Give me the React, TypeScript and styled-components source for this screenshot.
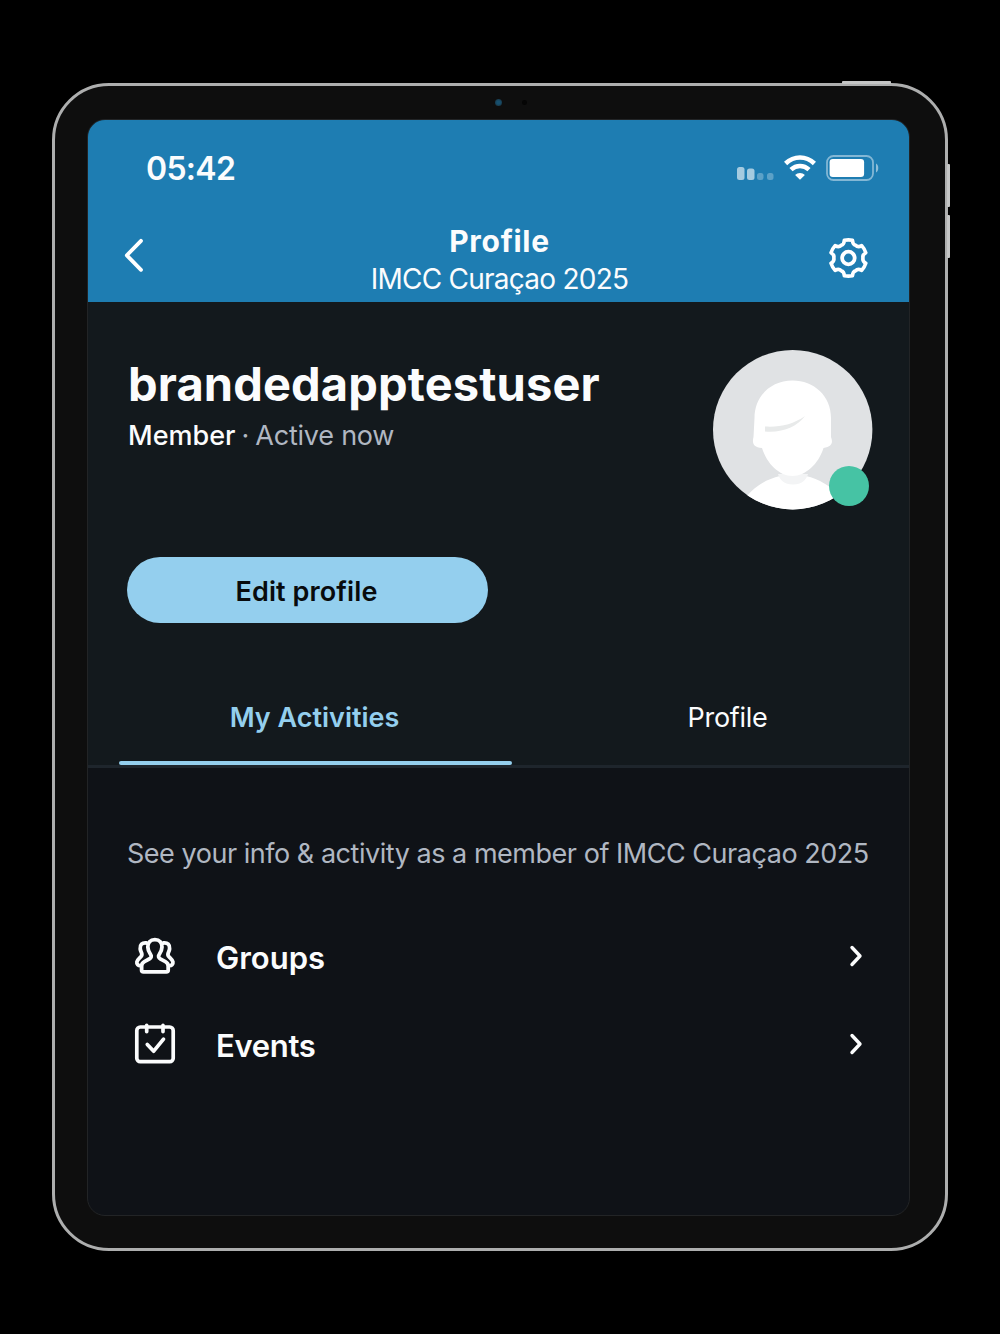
import React from "react";
import styled, { createGlobalStyle } from "styled-components";

const GlobalStyle = createGlobalStyle`
  *, *::before, *::after { box-sizing: border-box; }
  html, body { margin: 0; background: #000; }
  body { font-family: "Inter", "Noto Sans", sans-serif; -webkit-font-smoothing: antialiased; }
`;

const Stage = styled.main`
  width: 1000px;
  height: 1334px;
  padding: 83px 52px;
  background: #000;
  overflow: hidden;
`;

const Tablet = styled.div`
  position: relative;
  width: 896px;
  height: 1168px;
  padding: 33px 32px;
  border: 3px solid #adaeae;
  border-radius: 57px;
  background: #0e0e0e;
`;

const HardwareKey = styled.span<{ $top: number; $right: number; $w: number; $h: number }>`
  position: absolute;
  top: ${(p) => p.$top}px;
  right: ${(p) => p.$right}px;
  width: ${(p) => p.$w}px;
  height: ${(p) => p.$h}px;
  border-radius: 1px;
  background: #c4c5c5;
`;

const Lens = styled.span<{ $x: number; $size: number; $color: string }>`
  position: absolute;
  top: ${(p) => 16 - p.$size / 2}px;
  left: ${(p) => p.$x}px;
  width: ${(p) => p.$size}px;
  height: ${(p) => p.$size}px;
  border-radius: 50%;
  background: ${(p) => p.$color};
`;

const Screen = styled.div`
  display: flex;
  flex-direction: column;
  width: 823px;
  height: 1097px;
  border: 1px solid #222426;
  border-radius: 18px;
  background: #0f1217;
  overflow: hidden;
`;

const Header = styled.header`
  flex: none;
  height: 182px;
  background: #1e7db2;
  color: #fff;
`;

const StatusBar = styled.div`
  display: flex;
  align-items: center;
  justify-content: space-between;
  height: 96px;
  padding: 1px 29px 0 58px;
`;

const StatusIcons = styled.div`
  display: flex;
  gap: 10px;
  padding-bottom: 2px;
`;

const NavBar = styled.div`
  display: grid;
  grid-template-columns: 100px 1fr 100px;
  height: 86px;
`;

const IconButton = styled.button<{ $align: string; $pad: string }>`
  display: flex;
  align-items: flex-start;
  justify-content: ${(p) => p.$align};
  padding: ${(p) => p.$pad};
  border: 0;
  background: none;
  color: inherit;
`;

const TitleBlock = styled.div`
  display: flex;
  flex-direction: column;
  align-items: center;
  padding: 6px 0 0 2px;
`;

const Label = styled.span<{ $size: number; $line: number; $weight?: number; $track?: number; $color?: string }>`
  display: block;
  white-space: nowrap;
  font-size: ${(p) => p.$size}px;
  line-height: ${(p) => p.$line}px;
  font-weight: ${(p) => p.$weight ?? 400};
  letter-spacing: ${(p) => p.$track ?? 0}px;
  color: ${(p) => p.$color ?? "#fbfcfd"};
`;

const Summary = styled.section`
  flex: none;
  height: 466px;
  border-bottom: 3px solid #1e252c;
  background: #13191d;
`;

const Identity = styled.div`
  display: flex;
  justify-content: space-between;
  height: 255px;
  padding: 48px 36px 0 40px;
`;

const NameBlock = styled.div`
  padding-top: 6px;
`;

const RoleLine = styled.div`
  display: flex;
  gap: 6px;
  padding-top: 2px;
`;

const AvatarFrame = styled.div`
  position: relative;
  width: 160px;
  height: 160px;
`;

const OnlineDot = styled.span`
  position: absolute;
  left: 116px;
  top: 116px;
  width: 40px;
  height: 40px;
  border-radius: 50%;
  background: #46c3a4;
`;

const EditButton = styled.button`
  display: flex;
  align-items: center;
  justify-content: center;
  width: 361px;
  height: 66px;
  margin-left: 39px;
  padding: 4px 2px 0 0;
  border: 0;
  border-radius: 33px;
  background: #94cfee;
  font-family: inherit;
`;

const Tabs = styled.nav`
  display: grid;
  grid-template-columns: 393px 393px;
  column-gap: 20px;
  height: 142px;
  padding-left: 31px;
`;

const Tab = styled.div`
  display: flex;
  flex-direction: column;
  align-items: center;
  justify-content: flex-end;
  gap: 24px;
`;

const TabText = styled.div`
  padding-right: 2px;
`;

const TabMarker = styled.span<{ $active?: boolean }>`
  width: 100%;
  height: 4px;
  border-radius: 2px;
  background: ${(p) => (p.$active ? "#94cfee" : "transparent")};
`;

const Activities = styled.section`
  padding: 64px 40px 0 39px;
`;

const List = styled.ul`
  margin: 38px 0 0;
  padding: 0;
  list-style: none;
`;

const Row = styled.li`
  display: grid;
  grid-template-columns: 89px 1fr 20px;
  align-items: center;
  height: 88px;
  color: #fbfcfd;
`;

const RowIcon = styled.span`
  display: flex;
  padding: 0 0 4px 6px;
`;

const RowArrow = styled.span`
  display: flex;
  padding-bottom: 4px;
`;

const polar = (r: number, deg: number) => {
  const a = ((deg - 90) * Math.PI) / 180;
  return `${(22.4 + r * Math.cos(a)).toFixed(2)} ${(22 + r * Math.sin(a)).toFixed(2)}`;
};

const gearPath =
  `M${polar(18.2, -13)}` +
  [0, 60, 120, 180, 240, 300]
    .map(
      (d) =>
        `Q${polar(18.6, d)} ${polar(18.2, d + 13)}C${polar(15.2, d + 16)} ${polar(14.2, d + 22)} ${polar(14.6, d + 30)}C${polar(14.2, d + 38)} ${polar(15.2, d + 44)} ${polar(18.2, d + 47)}`
    )
    .join("") +
  "Z";

const GearIcon = () => (
  <svg width="44" height="44" viewBox="0 0 44 44" fill="none" stroke="currentColor" strokeWidth="3.6" strokeLinejoin="round">
    <path d={gearPath} />
    <circle cx="22.4" cy="22" r="6.300" strokeWidth="3.800" />
  </svg>
);

const BackIcon = () => (
  <svg width="24" height="36" viewBox="0 0 24 36" fill="none" stroke="currentColor" strokeWidth="3.8" strokeLinecap="round" strokeLinejoin="round">
    <path d="M19 3.800 4.800 18.300 19 32.800" />
  </svg>
);

const ChevronIcon = () => (
  <svg width="16" height="26" viewBox="0 0 16 26" fill="none" stroke="currentColor" strokeWidth="3.4" strokeLinecap="round" strokeLinejoin="round">
    <path d="M3 4.500 11 13 3 21.500" />
  </svg>
);

const SignalIcon = () => (
  <svg width="38" height="28" viewBox="0 0 38 28" fill="#fff">
    <rect x="1" y="13" width="7.500" height="13" rx="2.500" opacity=".6" />
    <rect x="11" y="14.500" width="7.500" height="11.500" rx="2.500" opacity=".6" />
    <rect x="21" y="19" width="6.500" height="7" rx="2.500" opacity=".28" />
    <rect x="31" y="19" width="6.500" height="7" rx="2.500" opacity=".28" />
  </svg>
);

const WifiIcon = () => (
  <svg width="32" height="28" viewBox="0 0 32 28" fill="none" stroke="#fff" strokeWidth="4.6">
    <path d="M1.600 9.500C10 1.500 22 1.500 30.400 9.500" />
    <path d="M7 15.600c5.200-4.900 12.800-4.900 18 0" />
    <path d="M16 25.800l-4.900-4.900c2.700-2.700 7.100-2.700 9.800 0z" fill="#fff" stroke="none" />
  </svg>
);

const BatteryIcon = () => (
  <svg width="54" height="28" viewBox="0 0 54 28">
    <rect x="1" y="2" width="46" height="24" rx="6.500" fill="none" stroke="#fff" strokeOpacity=".45" strokeWidth="1.800" />
    <rect x="3.600" y="5" width="34.500" height="18" rx="3.200" fill="#fff" />
    <path d="M50 9.500c3 1.500 3 7.500 0 9z" fill="#fff" opacity=".5" />
  </svg>
);

const GroupsIcon = () => (
  <svg width="44" height="44" viewBox="0 0 44 44" fill="none" stroke="currentColor" strokeWidth="3.8" strokeLinecap="round" strokeLinejoin="round">
    <path d="M21.900 5.700c-4.800 0-7.200 3-7.100 7.200.1 3.300 1.200 5.500 2.700 7.500 1.300 1.700.8 3.500-.9 4.400l-5.200 2.800c-1.900 1-2.800 2.500-2.800 4.500v3.800c0 1.200.7 1.900 1.900 1.900h22.800c1.200 0 1.900-.7 1.900-1.900v-3.800c0-2-.9-3.500-2.800-4.500l-5.200-2.800c-1.700-.9-2.200-2.700-.9-4.400 1.500-2 2.600-4.200 2.700-7.500.1-4.200-2.300-7.200-7.100-7.200Z" />
    <path d="M13.400 9c-4.300-.5-6.600 1.700-6.200 5.800.2 1.800.9 3 1.400 4.200.6 1.500.2 2.800-1 4-1.600 1.600-3.300 2.800-3.700 4.900-.4 2.200 1.200 3.600 3.600 3.800" />
    <path d="M30.400 9c4.300-.5 6.600 1.700 6.200 5.800-.2 1.800-.9 3-1.400 4.200-.6 1.500-.2 2.800 1 4 1.600 1.600 3.300 2.800 3.700 4.900.4 2.200-1.200 3.600-3.600 3.800" />
  </svg>
);

const EventsIcon = () => (
  <svg width="44" height="44" viewBox="0 0 44 44" fill="none" stroke="currentColor" strokeWidth="3.700" strokeLinecap="round" strokeLinejoin="round">
    <rect x="3.800" y="5" width="36.400" height="34.700" rx="3.500" />
    <path d="M13.700 3.400v6.200M30 3.400v6.200M14.300 22.400l6.400 6.800L30.500 17.200" />
  </svg>
);

const AvatarArt = () => (
  <svg width="160" height="160" viewBox="0 0 160 160">
    <defs>
      <clipPath id="avatar-round">
        <circle cx="79.700" cy="79.700" r="79.700" />
      </clipPath>
    </defs>
    <g clipPath="url(#avatar-round)">
      <rect width="160" height="160" fill="#e0e2e4" />
      <path d="M34 146C42 136 54 129 67 126Q80 132 93 126C106 129 118 136 126 146V160H34Z" fill="#fff" />
      <path d="M65 124h30c-2 6-6 10.500-15 10.500S67 130 65 124Z" fill="#f3f4f5" />
      <path d="M41.500 68C41.500 46 58 30.500 79.500 30.500s38.500 15.500 38.500 37.500v19c2 5 1.500 10-7.500 11-5 16-18 28-31 28s-25.500-12-30.500-28c-9-1-10-5-8.500-11Z" fill="#fff" />
      <path d="M52 76.500c15 .8 28-2 40-10.500-8 10.500-22 17-40 15.500Z" fill="#e8eaea" />
    </g>
  </svg>
);

const activities = [
  { name: "Groups", icon: <GroupsIcon />, track: 0 },
  { name: "Events", icon: <EventsIcon />, track: -0.3 },
];

export default function App() {
  return (
    <>
      <GlobalStyle />
      <Stage>
        <Tablet>
          <HardwareKey $top={-5} $right={54} $w={49} $h={3} />
          <HardwareKey $top={78} $right={-5} $w={3} $h={43} />
          <HardwareKey $top={129} $right={-5} $w={3} $h={43} />
          <Lens $x={440} $size={7} $color="radial-gradient(#17506f 30%, #192a33)" />
          <Lens $x={467} $size={5} $color="#050505" />
          <Screen>
            <Header>
              <StatusBar>
                <Label $size={32} $line={42} $weight={600} $track={-0.7}>05:42</Label>
                <StatusIcons>
                  <SignalIcon />
                  <WifiIcon />
                  <BatteryIcon />
                </StatusIcons>
              </StatusBar>
              <NavBar>
                <IconButton $align="flex-start" $pad="21px 0 0 34px" aria-label="Back">
                  <BackIcon />
                </IconButton>
                <TitleBlock>
                  <Label $size={30} $line={38} $weight={700} $track={0.7}>Profile</Label>
                  <Label $size={28} $line={39} $track={-0.75}>IMCC Curaçao 2025</Label>
                </TitleBlock>
                <IconButton $align="flex-end" $pad="20px 39px 0 0" aria-label="Settings">
                  <GearIcon />
                </IconButton>
              </NavBar>
            </Header>
            <Summary>
              <Identity>
                <NameBlock>
                  <Label $size={47} $line={56} $weight={700} $track={0.13}>brandedapptestuser</Label>
                  <RoleLine>
                    <Label $size={27} $line={44} $weight={500}>Member</Label>
                    <Label $size={27} $line={44} $color="#b0b7c2">·</Label>
                    <Label $size={27} $line={44} $track={-0.22} $color="#b0b7c2">Active now</Label>
                  </RoleLine>
                </NameBlock>
                <AvatarFrame>
                  <AvatarArt />
                  <OnlineDot />
                </AvatarFrame>
              </Identity>
              <EditButton>
                <Label $size={27} $line={34} $weight={600} $track={0.1} $color="#080b0d">Edit profile</Label>
              </EditButton>
              <Tabs>
                <Tab>
                  <TabText>
                    <Label $size={27} $line={38} $weight={600} $color="#94cfee">My Activities</Label>
                  </TabText>
                  <TabMarker $active />
                </Tab>
                <Tab>
                  <TabText>
                    <Label $size={27} $line={38} $track={-0.3}>Profile</Label>
                  </TabText>
                  <TabMarker />
                </Tab>
              </Tabs>
            </Summary>
            <Activities>
              <Label $size={27} $line={44} $track={-0.47} $color="#b0b7c2">See your info & activity as a member of IMCC Curaçao 2025</Label>
              <List>
                {activities.map((item) => (
                  <Row key={item.name}>
                    <RowIcon>{item.icon}</RowIcon>
                    <Label $size={31} $line={40} $weight={600} $track={item.track}>{item.name}</Label>
                    <RowArrow>
                      <ChevronIcon />
                    </RowArrow>
                  </Row>
                ))}
              </List>
            </Activities>
          </Screen>
        </Tablet>
      </Stage>
    </>
  );
}
